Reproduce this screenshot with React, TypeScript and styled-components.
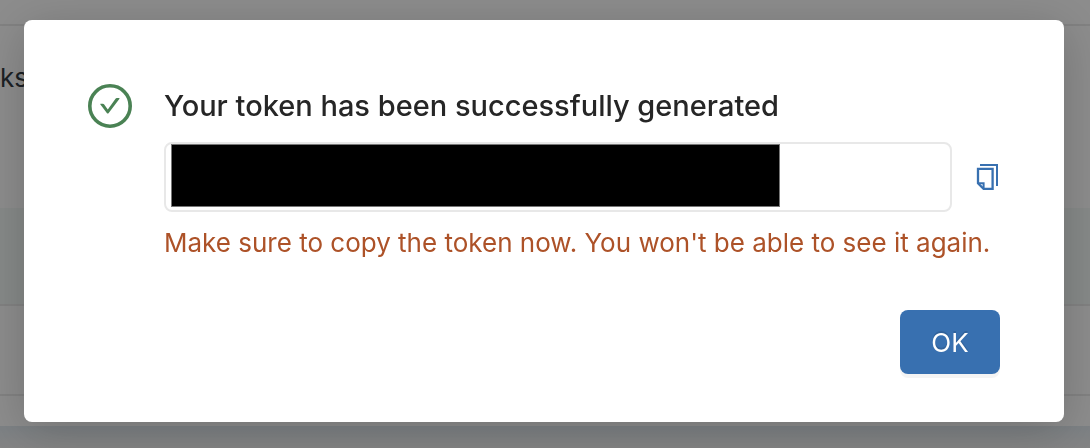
import React from "react";
import styled, { createGlobalStyle } from "styled-components";

const GlobalStyle = createGlobalStyle`
  *, *::before, *::after { box-sizing: border-box; }
  html, body, #root { height: 100%; }
  body {
    margin: 0;
    overflow: hidden;
    background: #ffffff;
    font-family: Inter, "Liberation Sans", sans-serif;
    font-size: 26px;
    color: rgba(0, 0, 0, 0.85);
  }
`;

const Page = styled.div`
  display: flex;
  flex-direction: column;
  height: 100vh;
`;

const Row = styled.div<{ $height: number; $tinted?: boolean; $divided?: boolean }>`
  flex: none;
  height: ${(p) => p.$height}px;
  background: ${(p) => (p.$tinted ? "#f4f9f7" : "#ffffff")};
  border-bottom: ${(p) => (p.$divided ? "2px solid #ebebeb" : "none")};
`;

const Cell = styled.div`
  padding-top: 32px;
  line-height: 40px;
  color: #333b42;
`;

const Footer = styled.div`
  flex: 1;
  background: linear-gradient(#e2eaf0, #f0f0f0);
`;

const Mask = styled.div`
  position: fixed;
  inset: 0;
  padding: 20px 26px 26px 24px;
  background: rgba(0, 0, 0, 0.45);
`;

const Dialog = styled.section`
  display: flex;
  flex-direction: column;
  padding: 64px 64px 48px;
  background: #ffffff;
  border-radius: 8px;
  box-shadow: 0 8px 48px rgba(0, 0, 0, 0.2);
`;

const Content = styled.div`
  display: flex;
  gap: 32px;
`;

const StatusIcon = styled.svg`
  flex: none;
  width: 44px;
  height: 44px;
`;

const Details = styled.div`
  flex: 1;
  min-width: 0;
`;

const Title = styled.h1`
  margin: 0 0 14px;
  font-size: 29px;
  font-weight: 500;
  line-height: 44px;
  white-space: nowrap;
  color: #262626;
`;

const TokenRow = styled.div`
  display: flex;
  align-items: center;
  gap: 24px;
`;

const TokenField = styled.div`
  display: flex;
  flex: 1;
  height: 70px;
  padding: 0 5px;
  border: 2px solid #e8e8e8;
  border-radius: 8px;
`;

const Redaction = styled.span`
  flex: 0 1 609px;
  height: 63px;
  background: #000000;
  border: 1px solid #777777;
`;

const TokenInput = styled.input`
  flex: 1;
  min-width: 0;
  padding: 0;
  border: 0;
  outline: 0;
  background: transparent;
  font: inherit;
`;

const CopyButton = styled.button`
  display: flex;
  padding: 0;
  border: 0;
  background: transparent;
  cursor: pointer;
`;

const Warning = styled.p`
  margin: 12px 0 0;
  line-height: 38px;
  white-space: nowrap;
  color: #ad5228;
`;

const Actions = styled.div`
  display: flex;
  justify-content: flex-end;
  margin-top: 48px;
`;

const PrimaryButton = styled.button`
  min-width: 100px;
  height: 64px;
  padding: 0 30px;
  border: 0;
  border-radius: 8px;
  background: #3870b0;
  box-shadow: 0 4px 0 rgba(0, 0, 0, 0.045);
  color: #ffffff;
  font: inherit;
  text-shadow: 0 -2px 0 rgba(0, 0, 0, 0.12);
  cursor: pointer;
`;

export default function App() {
  return (
    <>
      <GlobalStyle />
      <Page aria-hidden="true">
        <Row $height={26} $divided />
        <Row $height={182}>
          <Cell>ks</Cell>
        </Row>
        <Row $height={98} $tinted $divided />
        <Row $height={90} $divided />
        <Row $height={30} />
        <Footer />
      </Page>
      <Mask>
        <Dialog role="dialog" aria-modal="true" aria-labelledby="dialog-title">
          <Content>
            <StatusIcon viewBox="0 0 44 44" aria-hidden="true">
              <circle cx="22" cy="22" r="20.2" fill="none" stroke="#4a8254" strokeWidth="3.6" />
              <path
                d="M12.7 19.8h2.2c.6 0 1 .3 1.3.7l3.6 4.9 7.7-10.7c.3-.5.8-.7 1.3-.7h2.3c.4 0 .6.4.4.7L20.5 29.2c-.4.5-1.1.5-1.5 0L12.4 20.5c-.3-.3-.1-.7.3-.7z"
                fill="#4a8254"
              />
            </StatusIcon>
            <Details>
              <Title id="dialog-title">Your token has been successfully generated</Title>
              <TokenRow>
                <TokenField>
                  <Redaction />
                  <TokenInput aria-label="Token" readOnly />
                </TokenField>
                <CopyButton type="button" aria-label="Copy token">
                  <svg width="24" height="28" viewBox="0 0 24 28" fill="none" stroke="#3870b0" strokeWidth="2.3">
                    <path d="M4 2H21V23" strokeWidth="2" />
                    <path d="M2 5.8H16.6V25.9H7.6L2 20.3Z" />
                    <path d="M2 20.3H7.6V25.9" strokeWidth="2" />
                  </svg>
                </CopyButton>
              </TokenRow>
              <Warning>Make sure to copy the token now. You won't be able to see it again.</Warning>
            </Details>
          </Content>
          <Actions>
            <PrimaryButton type="button">OK</PrimaryButton>
          </Actions>
        </Dialog>
      </Mask>
    </>
  );
}
